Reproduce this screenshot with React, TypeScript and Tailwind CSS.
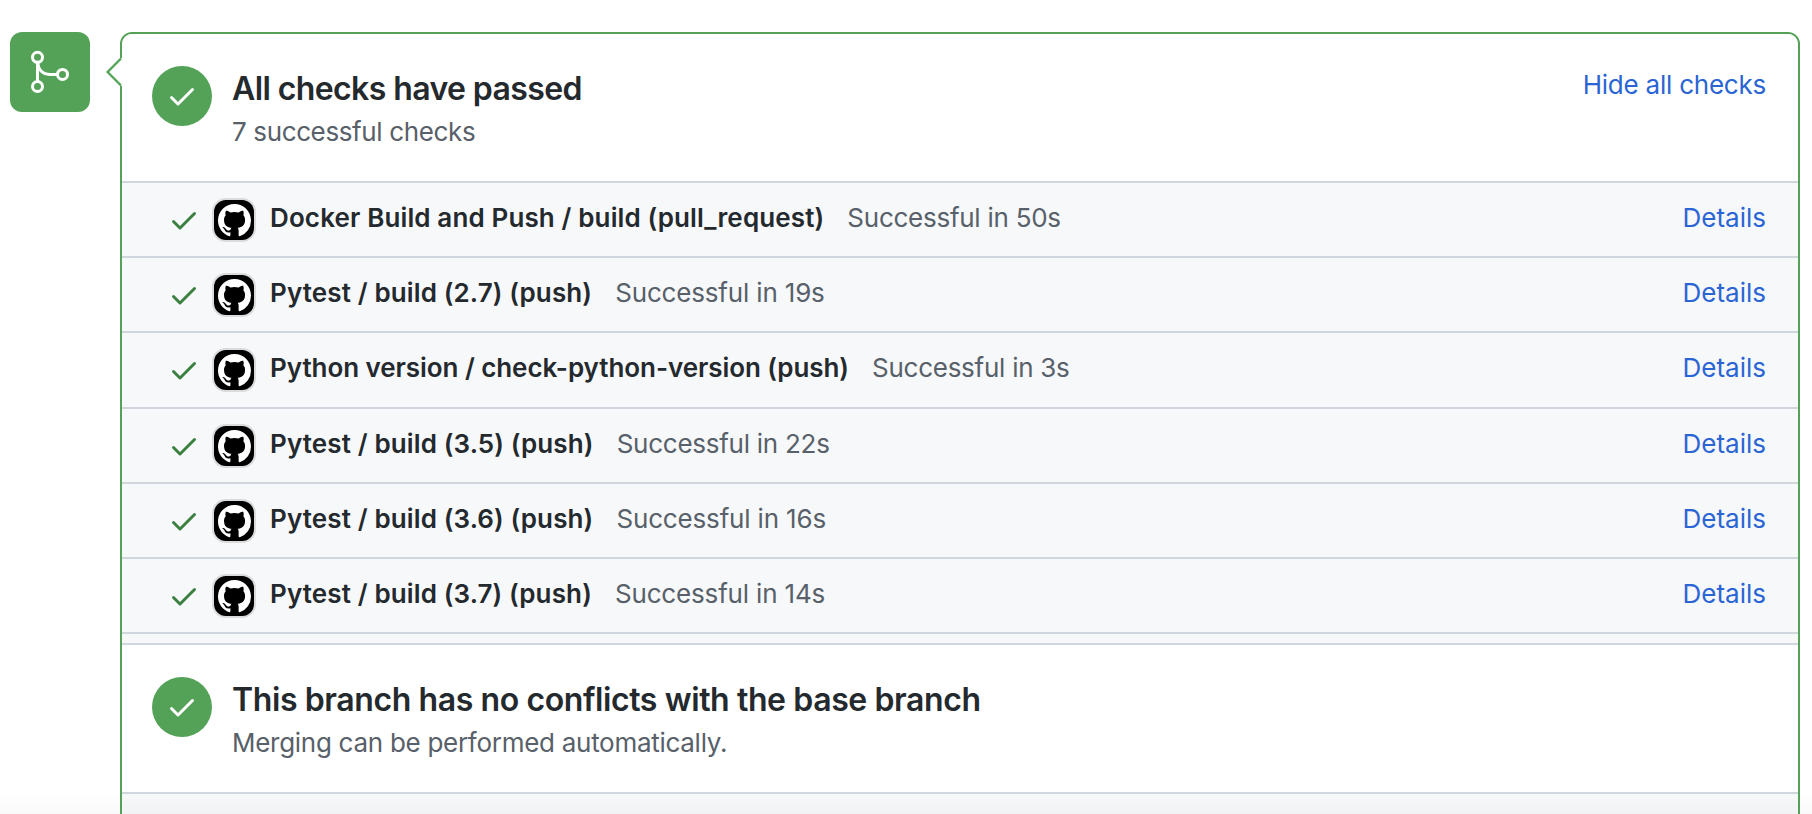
import React from "react";

type Check = { name: string; status: string; nameClass: string; statusClass: string; rowClass: string };

const checks: Check[] = [
  { name: "Docker Build and Push / build (pull_request)", status: "Successful in 50s", nameClass: "tracking-[0.13px]", statusClass: "tracking-[-0.26px]", rowClass: "h-[75px]" },
  { name: "Pytest / build (2.7) (push)", status: "Successful in 19s", nameClass: "tracking-[0.13px]", statusClass: "tracking-[-0.17px]", rowClass: "h-[75px]" },
  { name: "Python version / check-python-version (push)", status: "Successful in 3s", nameClass: "tracking-[-0.06px]", statusClass: "tracking-[-0.26px]", rowClass: "h-[76px]" },
  { name: "Pytest / build (3.5) (push)", status: "Successful in 22s", nameClass: "tracking-[0.13px]", statusClass: "tracking-[-0.26px]", rowClass: "h-[75px]" },
  { name: "Pytest / build (3.6) (push)", status: "Successful in 16s", nameClass: "tracking-[0.13px]", statusClass: "tracking-[-0.17px]", rowClass: "h-[75px]" },
  { name: "Pytest / build (3.7) (push)", status: "Successful in 14s", nameClass: "tracking-[0.13px]", statusClass: "tracking-[-0.17px]", rowClass: "h-[75px]" },
];

function CheckIcon({ className }: { className: string }) {
  return (
    <svg viewBox="0 0 16 16" className={className} fill="currentColor">
      <path d="M13.78 4.22a.75.75 0 0 1 0 1.06l-7.25 7.25a.75.75 0 0 1-1.06 0L2.22 9.28a.75.75 0 0 1 1.06-1.06L6 10.94l6.72-6.72a.75.75 0 0 1 1.06 0Z" />
    </svg>
  );
}

function MergeIcon() {
  return (
    <svg viewBox="0 0 80 80" className="size-20" fill="none" stroke="white" strokeWidth="3">
      <circle cx="27.5" cy="25.3" r="5" />
      <circle cx="27.5" cy="54.5" r="5" />
      <circle cx="52.5" cy="42.4" r="5" />
      <path d="M27.5 30.3v19M27.7 30.5c0.6 7.5 5 11.9 12 11.9h7.8" />
    </svg>
  );
}

function GitHubAvatar() {
  return (
    <div className="ml-3.5 mt-[17px] flex size-10 shrink-0 justify-center rounded-xl bg-black pt-1 ring-2 ring-[#d9dbdd]">
      <svg viewBox="0 0 16 16" className="size-[33px]" fill="white">
        <path d="M8 0C3.58 0 0 3.58 0 8c0 3.54 2.29 6.53 5.47 7.59.4.07.55-.17.55-.38 0-.19-.01-.82-.01-1.49-2.01.37-2.53-.49-2.69-.94-.09-.23-.48-.94-.82-1.13-.28-.15-.68-.52-.01-.53.63-.01 1.08.58 1.23.82.72 1.21 1.87.87 2.33.66.07-.52.28-.87.51-1.07-1.78-.2-3.64-.89-3.64-3.95 0-.87.31-1.59.82-2.15-.08-.2-.36-1.02.08-2.12 0 0 .67-.21 2.2.82.64-.18 1.32-.27 2-.27s1.36.09 2 .27c1.53-1.04 2.2-.82 2.2-.82.44 1.1.16 1.92.08 2.12.51.56.82 1.27.82 2.15 0 3.07-1.87 3.75-3.65 3.95.29.25.54.73.54 1.48 0 1.07-.01 1.93-.01 2.2 0 .21.15.46.55.38A8.01 8.01 0 0 0 16 8c0-4.42-3.58-8-8-8Z" />
      </svg>
    </div>
  );
}

type SummaryProps = { title: string; note: string; link?: string; titleClass: string; noteClass: string };

function Summary({ title, note, link, titleClass, noteClass }: SummaryProps) {
  return (
    <div className="flex h-[149px] items-start bg-white pt-8 pr-8 pl-[30px]">
      <div className="flex size-[60px] shrink-0 items-center justify-center rounded-full bg-[#54a257]">
        <CheckIcon className="size-8 text-white" />
      </div>
      <div className="-mt-px ml-5 grow">
        <h3 className={`text-[32px] leading-[47px] font-semibold text-[#24292e] ${titleClass}`}>{title}</h3>
        <p className={`text-[26px] leading-[39px] text-[#586069] ${noteClass}`}>{note}</p>
      </div>
      {link && <a className="-mt-px text-[26px] leading-[39px] tracking-[-0.23px] text-[#2b65d4]">{link}</a>}
    </div>
  );
}

function CheckRow({ check }: { check: Check }) {
  return (
    <li className={`flex items-start border-b-2 border-[#d0d6dd] pr-8 pl-[46px] ${check.rowClass}`}>
      <CheckIcon className="mt-[21px] size-8 shrink-0 text-[#3b8040]" />
      <GitHubAvatar />
      <div className="mt-[15px] ml-4 flex grow text-[26px] leading-[39px] whitespace-nowrap">
        <strong className={`font-semibold text-[#24292e] ${check.nameClass}`}>{check.name}</strong>
        <span className={`ml-[23px] text-[#586069] ${check.statusClass}`}>{check.status}</span>
        <a className="ml-auto text-[#2b65d4]">Details</a>
      </div>
    </li>
  );
}

export default function App() {
  return (
    <main className="flex h-[814px] w-[1812px] items-start overflow-hidden bg-linear-to-b from-white from-[790px] to-[#f9f9f9] to-[814px] pt-8 pl-2.5 font-['Inter',sans-serif]">
      <div className="size-20 shrink-0 rounded-xl bg-[#54a257]">
        <MergeIcon />
      </div>
      <section className="relative ml-[30px] flex h-[800px] w-[1680px] shrink-0 flex-col rounded-xl border-2 border-[#54a257]">
        <svg viewBox="0 0 16 30" className="absolute top-[23px] -left-4 h-[30px] w-4" fill="white">
          <path d="M14 1h2v28h-2z" />
          <path d="M15 1.5 1.6 15 15 28.5" stroke="#54a257" strokeWidth="2.4" />
        </svg>
        <div className="h-[149px] shrink-0 overflow-hidden rounded-t-[10px] border-b-2 border-[#d0d6dd]">
          <Summary
            title="All checks have passed"
            note="7 successful checks"
            link="Hide all checks"
            titleClass="tracking-[-0.6px]"
            noteClass="tracking-[-0.37px]"
          />
        </div>
        <ul className="bg-[#f6f8fa]">
          {checks.map((check) => (
            <CheckRow key={check.name} check={check} />
          ))}
        </ul>
        <div className="h-[11px] shrink-0 border-b-2 border-[#d0d6dd] bg-[#f6f8fa]" />
        <div className="h-[149px] shrink-0 overflow-hidden border-b-2 border-[#d0d6dd]">
          <Summary
            title="This branch has no conflicts with the base branch"
            note="Merging can be performed automatically."
            titleClass="tracking-[-0.4px]"
            noteClass="tracking-[-0.28px]"
          />
        </div>
        <div className="grow bg-linear-to-b from-[#f6f8fa] from-0% to-[#f0f1f3] to-[24px]" />
      </section>
    </main>
  );
}
